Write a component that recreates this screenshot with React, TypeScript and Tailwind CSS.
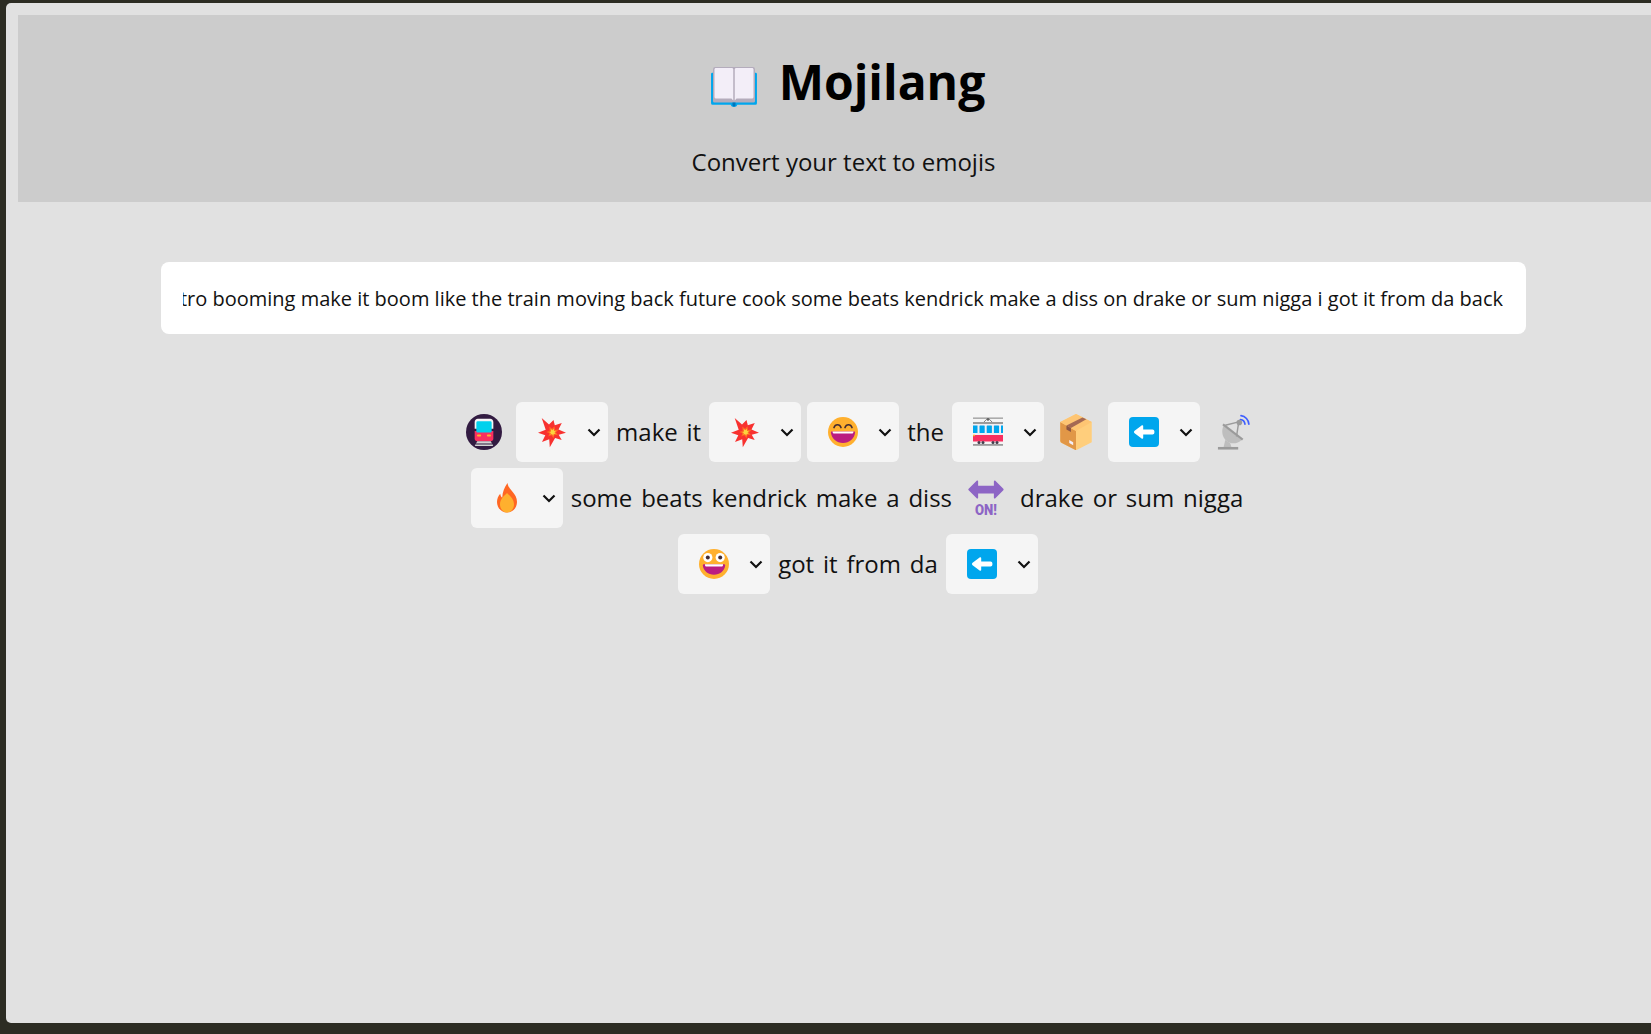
import React from "react";

const inputText =
  "metro booming make it boom like the train moving back future cook some beats kendrick make a diss on drake or sum nigga i got it from da back";

type IconProps = { className?: string };

function Book({ className }: IconProps) {
  return (
    <svg viewBox="0 0 32 32" className={className}>
      <path d="M1.600 6.500h28.800a.9.9 0 0 1 .9.9v19.400a1 1 0 0 1-1 1H18.200c-.3 1-1 1.500-2.200 1.500s-1.900-.5-2.200-1.500H1.700a1 1 0 0 1-1-1V7.400a.9.900 0 0 1 .9-.9z" fill="#00A6ED" />
      <path d="M3.400 2.700h25.200a1.400 1.400 0 0 1 1.400 1.400v21.200a1 1 0 0 1-1 1H3a1 1 0 0 1-1-1V4.100a1.400 1.400 0 0 1 1.400-1.400z" fill="#B4ACBC" />
      <path d="M4 3.400h10.500c.6 0 1 .4 1 1V25l-1.200-1.300H4a1 1 0 0 1-1-1V4.400c0-.6.4-1 1-1z" fill="#F3EEF8" />
      <path d="M28 3.400H17.500c-.6 0-1 .4-1 1V25l1.200-1.300H28a1 1 0 0 0 1-1V4.400c0-.6-.4-1-1-1z" fill="#F3EEF8" />
      <path d="M15 26.300h2V28a1 1 0 0 1-2 0z" fill="#0074BA" />
    </svg>
  );
}

function Metro({ className }: IconProps) {
  return (
    <svg viewBox="0 0 32 32" className={className}>
      <circle cx="16" cy="16" r="16" fill="#321B41" />
      <path d="M10.500 4.200h11c1.600 0 2.800 1.200 2.800 2.800v6H7.700V7c0-1.600 1.200-2.800 2.800-2.800z" fill="#F4F4F4" />
      <path d="M7.700 15h16.600v7c0 1.200-1 2.200-2.200 2.200H9.900c-1.200 0-2.200-1-2.200-2.200z" fill="#F92F60" />
      <rect x="9.200" y="6.500" width="13.600" height="10" rx="1.200" fill="#00D1ED" />
      <rect x="9.800" y="18.300" width="3.600" height="1.800" rx=".7" fill="#FFB02E" />
      <rect x="18.600" y="18.300" width="3.600" height="1.800" rx=".7" fill="#FFB02E" />
      <path d="M10 24.200h12l2.200 4.300H7.800z" fill="#D3D3D3" />
      <path d="M8.800 26.200h14.400v.9H8.800z" fill="#321B41" />
    </svg>
  );
}

function Boom({ className }: IconProps) {
  return (
    <svg viewBox="0 0 32 32" className={className}>
      <path d="M5.700 2l7.300 6.500L17.500 4l1.300 5.300 7-2.300-3.300 6.500 7.500 3.200-7.300 2.100 3 5.200-6.600-2.100-5.300 9.400-.6-8.100-7.200 2.800 3.300-6.700L2 16.700l7.700-2.900z" fill="#F8312F" />
      <path d="M13.300 10.500l2.800 2.300 2.400-2.600.5 3.800 3.700-.4-2.700 2.900 2 2.800-3.500-.5-1 3.400-2.200-2.900-3 1.200 1-3.200-3-1.300 3.300-1.200z" fill="#FF6723" />
      <path d="M14.700 12.800l1.600 1.400 1.400-1.500.4 2.200 2-.1-1.500 1.600 1.100 1.600-1.900-.2-.6 2-1.200-1.700-1.700.7.600-1.800-1.700-.8 1.800-.7z" fill="#FCD53F" />
    </svg>
  );
}

function Grin({ className }: IconProps) {
  return (
    <svg viewBox="0 0 32 32" className={className}>
      <circle cx="16" cy="16" r="15" fill="#FFB02E" />
      <path d="M7 11.600c.6-1.900 1.900-2.900 3.500-2.900s2.900 1 3.500 2.900M18 11.600c.6-1.900 1.900-2.900 3.500-2.900s2.900 1 3.500 2.900" fill="none" stroke="#402A32" strokeWidth="1.600" strokeLinecap="round" />
      <path d="M4.800 15.500h22.400c.6 0 1 .5.9 1.100C27.400 22.900 22.400 27 16 27S4.600 22.900 3.900 16.600c-.1-.6.3-1.100.9-1.100z" fill="#BB1D80" />
      <path d="M5.600 15.500h20.800v.6c0 1-.8 1.500-1.600 1.500H7.200c-.8 0-1.600-.5-1.600-1.500z" fill="#FFFFFF" />
    </svg>
  );
}

function Smiley({ className }: IconProps) {
  return (
    <svg viewBox="0 0 32 32" className={className}>
      <circle cx="16" cy="16" r="15" fill="#FFB02E" />
      <circle cx="9.800" cy="9.600" r="4.600" fill="#FFFFFF" />
      <circle cx="22.200" cy="9.600" r="4.600" fill="#FFFFFF" />
      <circle cx="9.800" cy="9.600" r="2" fill="#402A32" />
      <circle cx="22.200" cy="9.600" r="2" fill="#402A32" />
      <path d="M6 16.200h20c.8 0 1.300.6 1.200 1.300-.7 5.400-5.400 9.300-11.200 9.300S5.500 22.900 4.800 17.500c-.1-.7.400-1.300 1.200-1.300z" fill="#BB1D80" />
      <path d="M7 16.200h18v.8c0 1-.7 1.600-1.600 1.600H8.600C7.700 18.600 7 18 7 17z" fill="#FFFFFF" />
    </svg>
  );
}

function Tram({ className }: IconProps) {
  return (
    <svg viewBox="0 0 32 32" className={className}>
      <rect x="1" y="1.500" width="30" height="1.300" fill="#9B9B9B" />
      <path d="M11 7l3.500-3.600h3L21 7" fill="none" stroke="#636363" strokeWidth=".8" />
      <circle cx="16" cy="3.400" r="1.300" fill="#636363" />
      <rect x="1" y="6" width="30" height="2" fill="#9B9B9B" />
      <rect x="1" y="8" width="30" height="11" fill="#F0EEF2" />
      <rect x="1" y="9.500" width="4.500" height="7.500" fill="#00A6ED" />
      <rect x="7.500" y="9.500" width="5.200" height="7.500" rx=".6" fill="#00A6ED" />
      <rect x="14.700" y="9.500" width="5.200" height="7.500" rx=".6" fill="#00A6ED" />
      <rect x="21.900" y="9.500" width="5.200" height="7.500" rx=".6" fill="#00A6ED" />
      <rect x="29" y="9.500" width="2" height="7.500" fill="#00A6ED" />
      <rect x="1" y="19" width="30" height="6.500" fill="#F92F60" />
      <rect x="1" y="18.700" width="2" height="1.500" fill="#FFB02E" />
      <circle cx="7" cy="26.500" r="1.500" fill="#433B4B" />
      <circle cx="11" cy="26.500" r="1.500" fill="#433B4B" />
      <circle cx="21" cy="26.500" r="1.500" fill="#433B4B" />
      <circle cx="25" cy="26.500" r="1.500" fill="#433B4B" />
      <rect x="1" y="28" width="30" height="1.800" fill="#9B9B9B" />
    </svg>
  );
}

function Pack({ className }: IconProps) {
  return (
    <svg viewBox="0 0 32 32" className={className}>
      <path d="M16 0l14 7v18l-13.500 7h-1L2 25V7z" fill="#FFCE7C" />
      <path d="M2 7l14 8v17h-.5L3 25.500a2 2 0 0 1-1-1.700z" fill="#E19747" />
      <path d="M2 7l14-7 14 7-14 8z" fill="#FEC573" />
      <path d="M7.500 10.200L21.700 3l3.500 1.700L11.500 12.500z" fill="#A56953" />
      <path d="M7.500 10.200l4 2.300V16l-4-2.300z" fill="#8C5543" />
      <path d="M10 23l3.500 2v2.700L10 25.700z" fill="#F3EEF8" />
    </svg>
  );
}

function BackArrow({ className }: IconProps) {
  return (
    <svg viewBox="0 0 32 32" className={className}>
      <rect x="1" y="1" width="30" height="30" rx="4" fill="#00A6ED" />
      <path d="M6 16c0-.5.2-.9.6-1.200l7-5.400c.7-.5 1.600 0 1.600.8v3.300h9.300c1.100 0 1.900.9 1.900 2v1c0 1.100-.8 2-1.900 2h-9.300v3.300c0 .8-.9 1.300-1.600.8l-7-5.400C6.200 16.900 6 16.500 6 16z" fill="#FFFFFF" />
    </svg>
  );
}

function Fire({ className }: IconProps) {
  return (
    <svg viewBox="0 0 32 32" className={className}>
      <path d="M16.500 1c.6 4 2.700 6 5 8.800C24 12.700 26 15.700 26 20c0 6-4.500 10.500-10 10.500S6 26 6 20c0-3 1.200-6 3.200-8.200.3 1.800 1 3.200 2 4C11.500 10 13.500 5 16.500 1z" fill="#FF6723" />
      <path d="M16 11c3 3.200 7 5.800 7 11.500 0 4.300-3.100 8-7 8s-7-3.700-7-8c0-5.700 4-8.300 7-11.500z" fill="#FFB02E" />
    </svg>
  );
}

function Dish({ className }: IconProps) {
  return (
    <svg viewBox="0 0 32 32" className={className}>
      <path d="M23.500 5a4.500 4.500 0 0 1 4 4M24 1.500a8 8 0 0 1 7 7.500" fill="none" stroke="#3F5FFF" strokeWidth="1.500" strokeLinecap="round" />
      <path d="M8.500 10.500l16 12.500c-3.600 3.800-9.500 4-13.300 1-3.800-3-5-9.200-2.700-13.500z" fill="#BEBEBE" />
      <path d="M8 9.300l17.500 13.500" fill="none" stroke="#9B9B9B" strokeWidth="2" />
      <path d="M10 10L22 7M22 7L20 20" fill="none" stroke="#9B9B9B" strokeWidth="1.300" />
      <circle cx="22.500" cy="7.500" r="2.500" fill="#9B9B9B" />
      <path d="M10 23l4.500 3 1 3.500h-7z" fill="#BEBEBE" />
      <rect x="3.500" y="29.300" width="18" height="2.300" fill="#9B9B9B" />
    </svg>
  );
}

function OnArrow({ className }: IconProps) {
  return (
    <svg viewBox="0 0 32 32" className={`overflow-visible ${className}`}>
      <path d="M.3 8.500c0-.3.1-.5.3-.7L7.700.7C8.200.2 9 .6 9 1.300V5h14V1.300c0-.7.8-1.100 1.300-.6l7.100 7.100c.4.4.4 1 0 1.400l-7.100 7.100c-.5.5-1.300.1-1.300-.6V12H9v3.700c0 .7-.8 1.100-1.300.6L.6 9.200C.4 9 .3 8.800.3 8.500z" fill="#8D65C5" />
      <text x="16" y="31.500" textAnchor="middle" fontFamily="Roboto, sans-serif" fontWeight="900" fontSize="13.500" fill="#8D65C5" textLength="19.500" lengthAdjust="spacingAndGlyphs">ON!</text>
    </svg>
  );
}

function EmojiSelect({ icon: Icon }: { icon: React.ElementType }) {
  return (
    <div className="mx-[3px] flex h-[60px] w-[92px] shrink-0 items-center rounded-[6px] bg-[#f5f5f5] pl-[20px]">
      <Icon className="h-8 w-8" />
      <svg viewBox="0 0 14 9" className="ml-[19px] h-[9px] w-[14px]">
        <path d="M1.500 1.500L7 7l5.500-5.500" fill="none" stroke="#111111" strokeWidth="2.200" />
      </svg>
    </div>
  );
}

function Word({ children }: { children: React.ReactNode }) {
  return <span className="mx-[5px] whitespace-nowrap text-[24px] [word-spacing:2.6px] text-[#111111]">{children}</span>;
}

function Emoji({ icon: Icon }: { icon: React.ElementType }) {
  return <Icon className="mx-[11px] h-9 w-9 shrink-0" />;
}

export default function App() {
  return (
    <div className="h-screen w-full overflow-hidden bg-[#2c2c23] pl-[6px] pt-[3px] font-['Open_Sans',sans-serif]">
      <main className="h-[1020px] w-[1700px] rounded-[5px] bg-[#e1e1e1] pl-[12px] pt-[12px]">
        <header className="flex h-[187px] w-[1651px] flex-col items-center bg-[#cccccc]">
          <div className="mt-[34px] ml-[8px] flex h-[76px] items-center gap-[21px]">
            <Book className="h-12 w-12" />
            <h1 className="mb-[10px] text-[48px] leading-none font-bold text-black">Mojilang</h1>
          </div>
          <p className="mt-[21px] text-[24px] leading-[32px] text-[#111111]">Convert your text to emojis</p>
        </header>

        <div className="w-[1651px]">
          <div className="mx-auto mt-[60px] flex h-[72px] w-[1365px] items-center rounded-[8px] bg-white pt-[2px] pr-[23px] pl-[22px]">
            <div className="flex w-full justify-end overflow-hidden whitespace-nowrap text-[20px] text-[#111111]">
              <span className="shrink-0">{inputText}</span>
            </div>
          </div>

          <section className="mt-[68px] flex flex-col gap-[6px] pl-[29px]">
            <div className="flex h-[60px] items-center justify-center">
              <Emoji icon={Metro} />
              <EmojiSelect icon={Boom} />
              <Word>make it</Word>
              <EmojiSelect icon={Boom} />
              <EmojiSelect icon={Grin} />
              <Word>the</Word>
              <EmojiSelect icon={Tram} />
              <Emoji icon={Pack} />
              <EmojiSelect icon={BackArrow} />
              <Emoji icon={Dish} />
            </div>
            <div className="flex h-[60px] items-center justify-center">
              <EmojiSelect icon={Fire} />
              <Word>some beats kendrick make a diss</Word>
              <Emoji icon={OnArrow} />
              <Word>drake or sum nigga</Word>
            </div>
            <div className="flex h-[60px] items-center justify-center">
              <EmojiSelect icon={Smiley} />
              <Word>got it from da</Word>
              <EmojiSelect icon={BackArrow} />
            </div>
          </section>
        </div>
      </main>
    </div>
  );
}
